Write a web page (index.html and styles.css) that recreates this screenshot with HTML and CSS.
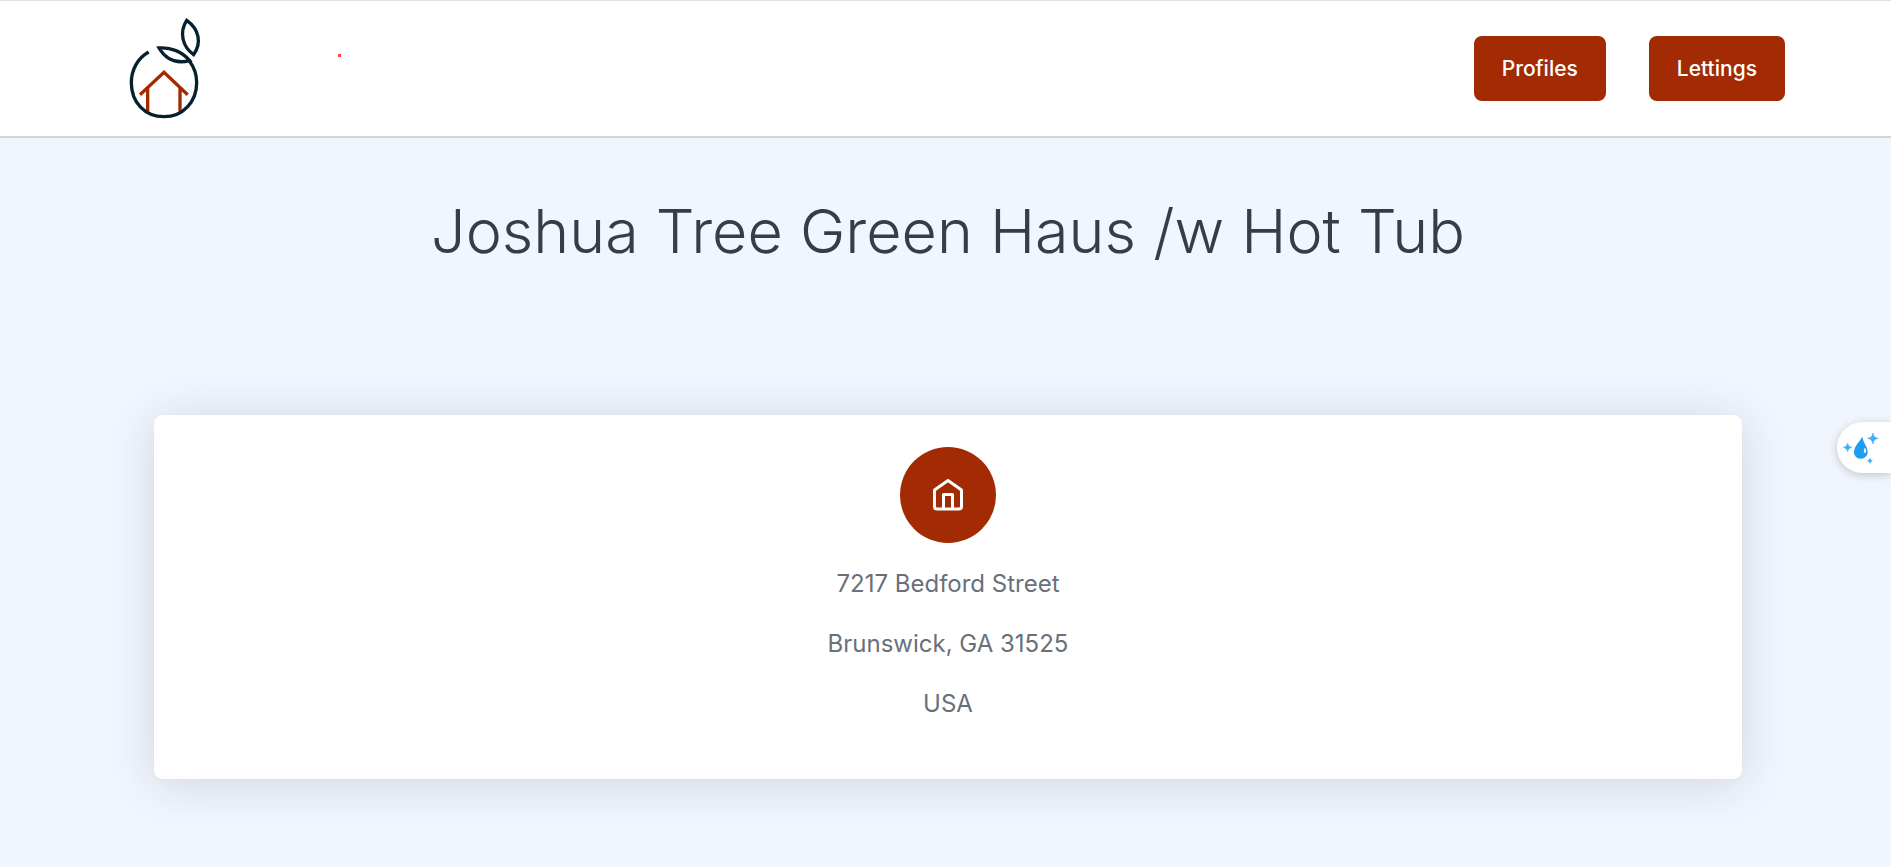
FILE: index.html
```html
<!DOCTYPE html>
<html lang="en">
<head>
<meta charset="utf-8">
<meta name="viewport" content="width=device-width, initial-scale=1">
<title>Joshua Tree Green Haus /w Hot Tub</title>
<link rel="stylesheet" href="styles.css">
</head>
<body>
<header class="topbar">
  <a class="brand" href="#" aria-label="Home">
    <svg class="brand-logo" viewBox="54 48 222 312" fill="none" stroke-width="10" aria-hidden="true">
      <g stroke="#a22b03">
        <path d="M90 284L162 217L233 284M113 264V334M210 264V334"/>
      </g>
      <g stroke="#07202e">
        <path d="M116 156C84 174 64 208 64 248C64 307 105 350 162 350C219 350 260 305 260 248C260 224 252 201 238 183"/>
        <path d="M147 144C182 141 217 155 239 182C203 191 169 181 147 144Z"/>
        <path d="M230 61C267 87 276 128 251 164C217 140 207 97 230 61Z"/>
      </g>
    </svg>
  </a>
  <span class="brand-dot"></span>
  <nav class="nav">
    <a class="button" href="#">Profiles</a>
    <a class="button" href="#">Lettings</a>
  </nav>
</header>
<main class="page">
  <h1 class="title">Joshua Tree Green Haus /w Hot Tub</h1>
  <section class="card">
    <div class="badge">
      <svg class="badge-icon" viewBox="0 0 36 36" fill="none" stroke="#fff" stroke-width="3" stroke-linejoin="round" stroke-linecap="round" aria-hidden="true">
        <path d="M4.500 13L18 3.500L31.500 13V29.500Q31.500 32 29 32H7Q4.500 32 4.500 29.500ZM13.500 32V17.500H22.500V32"/>
      </svg>
    </div>
    <p class="line">7217 Bedford Street</p>
    <p class="line">Brunswick, GA 31525</p>
    <p class="line">USA</p>
  </section>
</main>
<button class="assist" type="button" aria-label="Open assistant">
  <svg class="assist-icon" viewBox="69 96 108 96" aria-hidden="true">
    <path fill="#1e9df2" d="M127 110C130 130 143 139 143 156C143 168 134 176 122 176C110 176 102 168 102 156C102 140 116 128 127 110Z"/>
    <path fill="#fff" d="M134 143C140 148 140 158 134 159C130 158 131 151 134 143Z"/>
    <g fill="#3db0f7" stroke="#3db0f7" stroke-width="2">
      <path d="M159 99Q160 114 175 115Q160 117 159 132Q157 117 143 115Q157 114 159 99Z"/>
      <path d="M83 130Q84 141 95 142Q84 144 83 155Q81 144 70 142Q81 141 83 130Z"/>
      <path d="M150 175Q151 181 157 182Q151 184 150 190Q149 184 143 182Q149 181 150 175Z"/>
    </g>
  </svg>
</button>
</body>
</html>
```
FILE: styles.css
```css
* {
  box-sizing: border-box;
}

body {
  margin: 0;
  min-height: 100vh;
  background: #f1f5fd;
  color: #69707a;
  font-family: Metropolis, Inter, "Liberation Sans", sans-serif;
}

.topbar {
  display: flex;
  align-items: center;
  padding: 15px 106px 16px 128px;
  border-top: 1px solid #e0e0e0;
  border-bottom: 2px solid #cfd5dd;
  background: #fff;
}

.brand-logo {
  display: block;
  width: 74px;
  height: 104px;
}

.brand-dot {
  width: 3px;
  height: 3px;
  margin: 0 auto 26px 136px;
  background: #f4484e;
}

.nav {
  display: flex;
  gap: 43px;
}

.button {
  padding: 20px 28px;
  border-radius: 8px;
  background: #a22b03;
  color: #fff;
  font-size: 21px;
  font-weight: 500;
  line-height: 25px;
  text-decoration: none;
}

.page {
  padding: 57px 149px 88px 154px;
  text-align: center;
}

.title {
  margin: 0 0 148px;
  color: #363d47;
  font-size: 61px;
  font-weight: 300;
  line-height: 72px;
}

.card {
  padding: 32px 32px 42px;
  border-radius: 8px;
  background: #fff;
  box-shadow: 0 0 1px rgba(33, 40, 50, 0.15), 0 5px 48px rgba(33, 40, 50, 0.15);
}

.badge {
  display: flex;
  align-items: center;
  justify-content: center;
  width: 96px;
  height: 96px;
  margin: 0 auto 23px;
  border-radius: 50%;
  background: #a22b03;
}

.badge-icon {
  width: 36px;
  height: 36px;
}

.line {
  margin: 0 0 24px;
  font-size: 24px;
  line-height: 36px;
}

.line:last-child {
  margin-bottom: 15px;
}

.assist {
  position: fixed;
  top: 422px;
  right: 0;
  width: 54px;
  height: 51px;
  padding: 0 0 0 6px;
  border: 0;
  border-radius: 26px 0 0 26px;
  background: #fff;
  box-shadow: 0 2px 10px rgba(0, 0, 0, 0.2);
  text-align: left;
}

.assist-icon {
  display: block;
  width: 36px;
  height: 32px;
}
```
